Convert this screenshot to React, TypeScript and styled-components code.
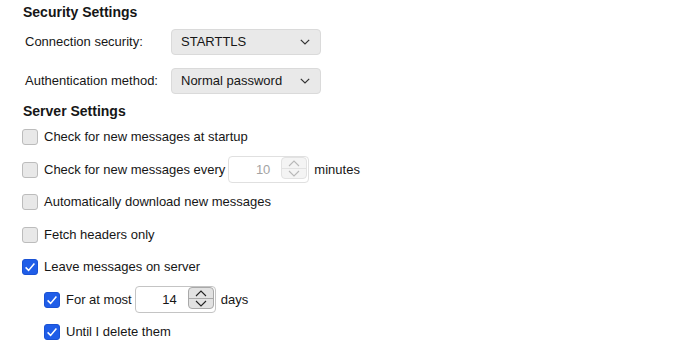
import styled, { createGlobalStyle } from "styled-components";

const Global = createGlobalStyle`
  html, body {
    margin: 0;
    padding: 0;
    background: #ffffff;
  }
  body {
    font-family: "Liberation Sans", Arial, sans-serif;
    font-size: 13px;
    color: #161616;
  }
`;

const Page = styled.div`
  width: 690px;
  height: 347px;
  padding: 4px 0 0 22px;
  box-sizing: border-box;
  overflow: hidden;
`;

const SectionTitle = styled.div<{ $top?: number }>`
  font-weight: bold;
  font-size: 14px;
  line-height: 17px;
  padding-left: 1px;
  margin-top: ${(p) => p.$top || 0}px;
`;

const FieldGrid = styled.div`
  display: grid;
  grid-template-columns: 146px 150px;
  row-gap: 13px;
  align-items: center;
  padding-left: 3px;
  margin-top: 8px;
`;

const Label = styled.span`
  line-height: 16px;
`;

const SelectBox = styled.div`
  position: relative;
  height: 26px;
  box-sizing: border-box;
  background: #e9e9e9;
  border: 1px solid #dadada;
  border-radius: 4px;
  padding-left: 9px;
  display: flex;
  align-items: center;
  line-height: 16px;
`;

const Chevron = styled.svg`
  position: absolute;
  right: 10px;
  top: 50%;
  margin-top: -3px;
`;

function Select({ value }: { value: string }) {
  return (
    <SelectBox>
      {value}
      <Chevron width="10" height="6" viewBox="0 0 10 6">
        <path d="M0.8 0.8 L5 5 L9.2 0.8" fill="none" stroke="#333" strokeWidth="1.2" />
      </Chevron>
    </SelectBox>
  );
}

const CheckList = styled.div`
  display: flex;
  flex-direction: column;
  margin-top: 1px;
`;

const Row = styled.div<{ $indent?: boolean }>`
  display: flex;
  align-items: center;
  height: 32.5px;
  padding-left: ${(p) => (p.$indent ? 22 : 0)}px;
  line-height: 16px;
`;

const Box = styled.span<{ $checked?: boolean }>`
  width: 16px;
  height: 16px;
  box-sizing: border-box;
  border-radius: 3px;
  margin-right: 6px;
  display: flex;
  align-items: center;
  justify-content: center;
  flex: none;
  background: ${(p) => (p.$checked ? "#1f5de8" : "#e8e8e8")};
  border: 1px solid ${(p) => (p.$checked ? "#1a52d4" : "#bcbcbc")};
`;

function CheckBox({ checked }: { checked?: boolean }) {
  return (
    <Box $checked={checked}>
      {checked && (
        <svg width="14" height="14" viewBox="0 0 14 14">
          <path d="M2.6 7.4 L5.6 10.4 L11.4 3.4" fill="none" stroke="#fff" strokeWidth="1.5" />
        </svg>
      )}
    </Box>
  );
}

const NumberBox = styled.div<{ $disabled?: boolean }>`
  position: relative;
  width: 81px;
  height: 27px;
  box-sizing: border-box;
  margin: 0 5px 0 3px;
  background: #fff;
  border: 1px solid ${(p) => (p.$disabled ? "#e0e0e0" : "#c4c4c4")};
  border-radius: 4px;
  color: ${(p) => (p.$disabled ? "#a3a3a3" : "#161616")};
  display: flex;
  align-items: center;
  justify-content: flex-end;
  padding-right: 38px;
`;

const Spinner = styled.div<{ $disabled?: boolean }>`
  position: absolute;
  right: 1px;
  top: 0px;
  width: 26px;
  height: 22px;
  box-sizing: border-box;
  border: 1px solid ${(p) => (p.$disabled ? "#e2e2e2" : "#a9a9a9")};
  border-radius: 4px;
  background: ${(p) => (p.$disabled ? "#f4f4f4" : "#e2e2e2")};
  display: flex;
  flex-direction: column;
`;

const SpinHalf = styled.div<{ $disabled?: boolean; $top?: boolean }>`
  flex: 1;
  display: flex;
  align-items: center;
  justify-content: center;
  border-bottom: ${(p) =>
    p.$top ? `1px solid ${p.$disabled ? "#e2e2e2" : "#a9a9a9"}` : "none"};
`;

function NumberInput({ value, disabled }: { value: string; disabled?: boolean }) {
  const c = disabled ? "#b8b8b8" : "#222";
  return (
    <NumberBox $disabled={disabled}>
      {value}
      <Spinner $disabled={disabled}>
        <SpinHalf $top $disabled={disabled}>
          <svg width="12" height="7" viewBox="0 0 12 7">
            <path d="M1 6 L6 1 L11 6" fill="none" stroke={c} strokeWidth="1.1" />
          </svg>
        </SpinHalf>
        <SpinHalf $disabled={disabled}>
          <svg width="12" height="7" viewBox="0 0 12 7">
            <path d="M1 1 L6 6 L11 1" fill="none" stroke={c} strokeWidth="1.1" />
          </svg>
        </SpinHalf>
      </Spinner>
    </NumberBox>
  );
}

export default function App() {
  return (
    <Page>
      <Global />
      <SectionTitle>Security Settings</SectionTitle>
      <FieldGrid>
        <Label>Connection security:</Label>
        <Select value="STARTTLS" />
        <Label>Authentication method:</Label>
        <Select value="Normal password" />
      </FieldGrid>
      <SectionTitle $top={9}>Server Settings</SectionTitle>
      <CheckList>
        <Row>
          <CheckBox />
          Check for new messages at startup
        </Row>
        <Row>
          <CheckBox />
          Check for new messages every
          <NumberInput value="10" disabled />
          minutes
        </Row>
        <Row>
          <CheckBox />
          Automatically download new messages
        </Row>
        <Row>
          <CheckBox />
          Fetch headers only
        </Row>
        <Row>
          <CheckBox checked />
          Leave messages on server
        </Row>
        <Row $indent>
          <CheckBox checked />
          For at most
          <NumberInput value="14" />
          days
        </Row>
        <Row $indent>
          <CheckBox checked />
          Until I delete them
        </Row>
      </CheckList>
    </Page>
  );
}
